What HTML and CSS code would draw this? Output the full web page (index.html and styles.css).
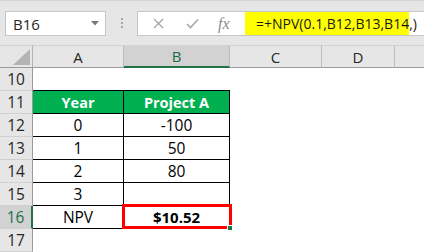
FILE: index.html
```html
<!DOCTYPE html>
<html>
<head>
<meta charset="utf-8">
<link rel="stylesheet" href="styles.css">
</head>
<body>
<div class="app">
  <div class="toolbar">
    <div class="namebox">
      <span class="ref">B16</span>
      <svg class="drop" width="8" height="5" viewBox="0 0 8 5"><path d="M0 0H8L4 4.5Z" fill="#7a7a7a"/></svg>
    </div>
    <div class="grip"><i></i><i></i><i></i></div>
    <div class="fbox">
      <svg class="ico" width="11" height="11" viewBox="0 0 11 11"><path d="M1 1L10 10M10 1L1 10" stroke="#a6a6a6" stroke-width="1.3"/></svg>
      <svg class="ico" width="13" height="11" viewBox="0 0 13 11"><path d="M1 6L4.5 9.5L12 1.5" stroke="#a6a6a6" stroke-width="1.6" fill="none"/></svg>
      <span class="fx">fx</span>
      <span class="formula">=+NPV(0.1,B12,B13,B14,)</span>
    </div>
  </div>
  <div class="sheet">
    <div class="corner"><svg width="17" height="16" viewBox="0 0 17 16"><path d="M17 0V16H0Z" fill="#b4b4b4"/></svg></div>
    <div class="ch">A</div>
    <div class="ch sel">B</div>
    <div class="ch">C</div>
    <div class="ch">D</div>
    <div class="ch last"></div>

    <div class="rh">10</div>
    <div class="c tb"></div><div class="c tb"></div><div class="c"></div><div class="c"></div><div class="c"></div>

    <div class="rh">11</div>
    <div class="c t hd">Year</div><div class="c t hd">Project A</div><div class="c"></div><div class="c"></div><div class="c"></div>

    <div class="rh">12</div>
    <div class="c t">0</div><div class="c t">-100</div><div class="c"></div><div class="c"></div><div class="c"></div>

    <div class="rh">13</div>
    <div class="c t">1</div><div class="c t">50</div><div class="c"></div><div class="c"></div><div class="c"></div>

    <div class="rh">14</div>
    <div class="c t">2</div><div class="c t">80</div><div class="c"></div><div class="c"></div><div class="c"></div>

    <div class="rh">15</div>
    <div class="c t">3</div><div class="c t"></div><div class="c"></div><div class="c"></div><div class="c"></div>

    <div class="rh selr">16</div>
    <div class="c t">NPV</div><div class="c t res">$10.52<span class="handle"></span></div><div class="c"></div><div class="c"></div><div class="c"></div>

    <div class="rh">17</div>
    <div class="c"></div><div class="c"></div><div class="c"></div><div class="c"></div><div class="c"></div>
  </div>
</div>
</body>
</html>
```

FILE: styles.css
```css
html, body {
  margin: 0;
  padding: 0;
  background: #ffffff;
}
body {
  font-family: "Open Sans", "Liberation Sans", sans-serif;
  width: 424px;
  height: 252px;
  overflow: hidden;
}
.app {
  display: flex;
  flex-direction: column;
  width: 424px;
  height: 252px;
}
.toolbar {
  height: 46px;
  background: #e6e6e6;
  border-top: 1px solid #d4d4d4;
  box-sizing: border-box;
  display: flex;
  align-items: flex-start;
  padding-top: 10px;
  padding-left: 5px;
}
.namebox {
  width: 101px;
  height: 25px;
  box-sizing: border-box;
  background: #fff;
  border: 1px solid #c6c6c6;
  display: flex;
  align-items: center;
  justify-content: space-between;
  padding: 0 6px 0 7px;
}
.ref {
  font-size: 15px;
  color: #262626;
}
.drop {
  display: block;
}
.grip {
  width: 31px;
  display: flex;
  flex-direction: column;
  align-items: center;
  gap: 2px;
  padding-top: 7px;
}
.grip i {
  display: block;
  width: 2px;
  height: 2px;
  background: #a6a6a6;
}
.fbox {
  flex: 1;
  height: 25px;
  box-sizing: border-box;
  background: #fff;
  border: 1px solid #c6c6c6;
  border-right: none;
  display: flex;
  align-items: center;
  padding-left: 15px;
}
.ico {
  display: block;
  margin-right: 22px;
}
.ico + .ico {
  margin-right: 19px;
}
.fx {
  font-family: "Liberation Serif", "DejaVu Serif", serif;
  font-style: italic;
  font-size: 16px;
  color: #8c8c8c;
  width: 27px;
}
.formula {
  background: #ffff00;
  height: 23px;
  line-height: 23px;
  width: 164px;
  box-sizing: border-box;
  padding-left: 11px;
  font-size: 14px;
  color: #1a1a1a;
  white-space: nowrap;
}
.sheet {
  flex: 1;
  display: grid;
  grid-template-columns: 33px 91px 106px 92px 73px 1fr;
  grid-template-rows: 23px repeat(7, 23px) 1fr;
  background: #fff;
}
.corner {
  background: #e6e6e6;
  border-top: 1px solid #d4d4d4;
  border-right: 1px solid #b4b4b4;
  border-bottom: 1px solid #9b9b9b;
  box-sizing: border-box;
  display: flex;
  align-items: flex-end;
  justify-content: flex-end;
  padding: 0 2px 2px 0;
}
.corner svg {
  display: block;
}
.ch {
  background: #e6e6e6;
  border-top: 1px solid #d4d4d4;
  border-right: 1px solid #bcbcbc;
  border-bottom: 1px solid #9b9b9b;
  box-sizing: border-box;
  display: flex;
  align-items: center;
  justify-content: center;
  font-size: 15px;
  color: #262626;
}
.ch.last {
  border-right: none;
}
.ch.sel {
  background: #d2d2d2;
  color: #1e6b41;
  border-bottom: 2px solid #217346;
}
.rh {
  background: #e6e6e6;
  border-right: 1px solid #9b9b9b;
  border-bottom: 1px solid #d0d0d0;
  box-sizing: border-box;
  display: flex;
  align-items: center;
  justify-content: center;
  font-size: 15.5px;
  color: #262626;
}
.rh.selr {
  background: #d2d2d2;
  color: #217346;
  border-right: 2px solid #217346;
}
.c {
  box-sizing: border-box;
  display: flex;
  align-items: center;
  justify-content: center;
  font-size: 15.5px;
  color: #000;
  position: relative;
}
.c.t {
  border-right: 1px solid #000;
  border-bottom: 1px solid #000;
}
.c.tb {
  border-bottom: 1px solid #000;
}
.c.hd {
  background: #00b050;
  color: #fff;
  font-weight: bold;
  font-size: 14.5px;
}
.c.res {
  font-weight: bold;
  font-size: 15px;
}
.c.res::before {
  content: "";
  position: absolute;
  left: -2px;
  top: -2px;
  right: -3px;
  bottom: -1px;
  border: 3px solid #ff0000;
}
.handle {
  position: absolute;
  right: -3px;
  bottom: -2px;
  width: 4px;
  height: 4px;
  background: #217346;
  border: 1px solid #fff;
  border-right: none;
  border-bottom: none;
}
```
